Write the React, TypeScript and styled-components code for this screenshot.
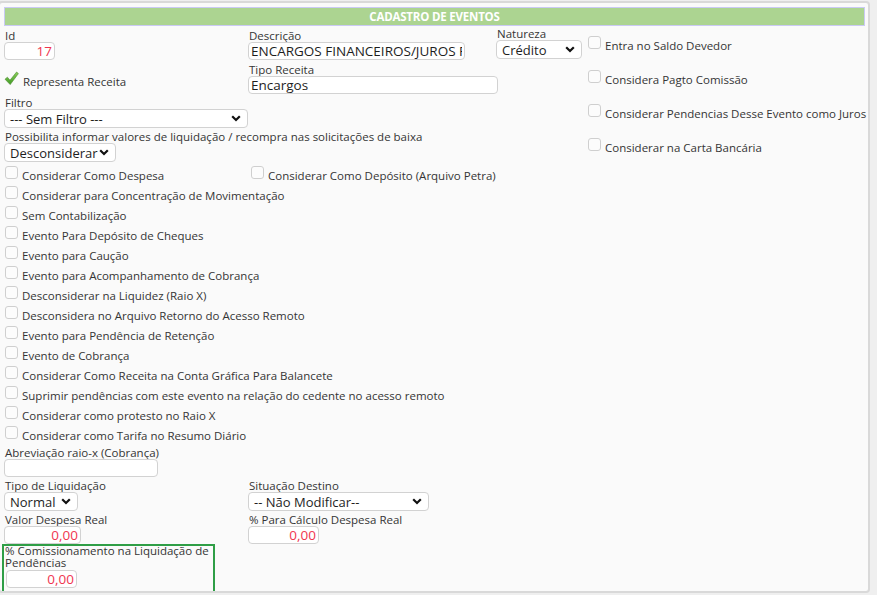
import styled, { createGlobalStyle } from "styled-components";

const GlobalStyle = createGlobalStyle`
  html, body {
    margin: 0;
    padding: 0;
    background: #efefef;
  }
  body {
    font-family: "Open Sans", "Liberation Sans", sans-serif;
    color: #353535;
    overflow: hidden;
  }
`;

const Page = styled.div`
  width: 877px;
  height: 595px;
  padding-top: 1px;
  box-sizing: border-box;
`;

const Panel = styled.div`
  margin-left: -2px;
  width: 872px;
  height: 592px;
  box-sizing: border-box;
  border: 2px solid #d9d9d9;
  border-radius: 4px;
  background: #fafafa;
  padding: 4px 0 0 4px;
  font-size: 11.5px;
  overflow: hidden;
`;

const Header = styled.div`
  width: 861px;
  height: 19px;
  box-sizing: border-box;
  border: 1px solid #cacaf4;
  background: #acd491;
  color: #fff;
  font-weight: 700;
  font-size: 11.5px;
  letter-spacing: -0.2px;
  display: flex;
  align-items: center;
  justify-content: center;
`;

const TopArea = styled.div`
  display: flex;
  align-items: flex-start;
`;

const TopGrid = styled.div`
  width: 580px;
  display: grid;
  grid-template-columns: 244px 248px 84px;
  grid-template-rows: 35px 34px 34px 34px;
`;

const Cell = styled.div<{ $col?: string; $row?: string; $top?: number }>`
  grid-column: ${(p) => p.$col || "auto"};
  grid-row: ${(p) => p.$row || "auto"};
  padding-top: ${(p) => p.$top ?? 0}px;
  display: flex;
  flex-direction: column;
  align-items: flex-start;
`;

const Label = styled.label`
  display: block;
  font-size: 11.5px;
  line-height: 13px;
  padding-left: 1px;
  white-space: nowrap;
`;

const TextInput = styled.input<{ $w: number; $num?: boolean }>`
  width: ${(p) => p.$w}px;
  height: 18px;
  box-sizing: border-box;
  border: 1px solid #d2d2d2;
  border-radius: 4px;
  background: #fff;
  padding: 0 2px;
  margin: 0;
  font-family: inherit;
  font-size: 13.5px;
  color: ${(p) => (p.$num ? "#f0364f" : "#1e1e1e")};
  text-align: ${(p) => (p.$num ? "right" : "left")};
  outline: none;
`;

const SelectBox = styled.div<{ $w: number }>`
  width: ${(p) => p.$w}px;
  height: 19px;
  box-sizing: border-box;
  border: 1px solid #d2d2d2;
  border-radius: 4px;
  background: #fff;
  display: flex;
  align-items: center;
  justify-content: space-between;
  padding: 0 6px 0 5px;
  font-size: 13px;
  color: #1e1e1e;
  white-space: nowrap;
`;

const Box = styled.span`
  width: 13px;
  height: 13px;
  box-sizing: border-box;
  border: 1px solid #cfcfcf;
  border-radius: 3px;
  background: #fcfcfc;
  flex-shrink: 0;
`;

const CheckRow = styled.div<{ $h?: number }>`
  display: flex;
  align-items: flex-start;
  height: ${(p) => (p.$h ? `${p.$h}px` : "auto")};
  gap: 4px;
  white-space: nowrap;
`;

const CheckText = styled.span<{ $top?: number }>`
  padding-top: ${(p) => p.$top ?? 3}px;
  line-height: 13px;
`;

const RightChecks = styled.div`
  padding-top: 10px;
  padding-left: 4px;
  display: flex;
  flex-direction: column;
  gap: 18px;
`;

const CheckList = styled.div`
  padding-top: 3px;
  padding-left: 1px;
  display: flex;
  flex-direction: column;
`;

const SplitRow = styled.div`
  display: grid;
  grid-template-columns: 246px auto;
`;

const BottomGrid = styled.div`
  display: grid;
  grid-template-columns: 244px auto;
  grid-template-rows: 34px 33px;
`;

const Highlight = styled.div`
  margin-left: -2px;
  width: 213px;
  height: 49px;
  box-sizing: border-box;
  border: 2px solid #2f9e46;
  display: flex;
  flex-direction: column;
`;

const WrapLabel = styled.div`
  line-height: 12px;
  padding-left: 1px;
  margin-top: -1px;
`;

const FieldWrap = styled.div`
  padding: 1px 0 0 2px;
`;

const Chevron = () => (
  <svg width="10" height="7" viewBox="0 0 10 7">
    <path d="M1.2 1.2 L5 5 L8.8 1.2" fill="none" stroke="#111" strokeWidth="2.2" />
  </svg>
);

const GreenCheck = () => (
  <svg width="15" height="15" viewBox="0 0 15 15">
    <defs>
      <linearGradient id="gck" x1="0" y1="0" x2="0" y2="1">
        <stop offset="0" stopColor="#8ccf5b" />
        <stop offset="1" stopColor="#3f9a24" />
      </linearGradient>
    </defs>
    <path
      d="M1 8.2 L3.4 6.2 L6 9.2 L12.6 1 L14.4 2.6 L6.2 13.6 Z"
      fill="url(#gck)"
      stroke="#4a8a2c"
      strokeWidth="0.6"
      strokeLinejoin="round"
    />
  </svg>
);

const Check = ({ text, h = 20 }: { text: string; h?: number }) => (
  <CheckRow $h={h}>
    <Box />
    <CheckText>{text}</CheckText>
  </CheckRow>
);

const listItems = [
  "Considerar para Concentração de Movimentação",
  "Sem Contabilização",
  "Evento Para Depósito de Cheques",
  "Evento para Caução",
  "Evento para Acompanhamento de Cobrança",
  "Desconsiderar na Liquidez (Raio X)",
  "Desconsidera no Arquivo Retorno do Acesso Remoto",
  "Evento para Pendência de Retenção",
  "Evento de Cobrança",
  "Considerar Como Receita na Conta Gráfica Para Balancete",
  "Suprimir pendências com este evento na relação do cedente no acesso remoto",
  "Considerar como protesto no Raio X",
  "Considerar como Tarifa no Resumo Diário",
];

const rightItems = [
  "Entra no Saldo Devedor",
  "Considera Pagto Comissão",
  "Considerar Pendencias Desse Evento como Juros",
  "Considerar na Carta Bancária",
];

export default function App() {
  return (
    <Page>
      <GlobalStyle />
      <Panel>
        <Header>CADASTRO DE EVENTOS</Header>
        <TopArea>
          <TopGrid>
            <Cell $col="1" $row="1" $top={3}>
              <Label>Id</Label>
              <TextInput $w={51} $num readOnly value="17" />
            </Cell>
            <Cell $col="2" $row="1" $top={3}>
              <Label>Descrição</Label>
              <TextInput $w={217} readOnly value="ENCARGOS FINANCEIROS/JUROS PAGOS" />
            </Cell>
            <Cell $col="3" $row="1" $top={1}>
              <Label>Natureza</Label>
              <SelectBox $w={86}>
                Crédito
                <Chevron />
              </SelectBox>
            </Cell>
            <Cell $col="1" $row="2" $top={10}>
              <CheckRow>
                <GreenCheck />
                <CheckText $top={4}>Representa Receita</CheckText>
              </CheckRow>
            </Cell>
            <Cell $col="2 / span 2" $row="2" $top={2}>
              <Label>Tipo Receita</Label>
              <TextInput $w={250} readOnly value="Encargos" />
            </Cell>
            <Cell $col="1 / span 2" $row="3" $top={1}>
              <Label>Filtro</Label>
              <SelectBox $w={244}>
                --- Sem Filtro ---
                <Chevron />
              </SelectBox>
            </Cell>
            <Cell $col="1 / span 3" $row="4" $top={1}>
              <Label>Possibilita informar valores de liquidação / recompra nas solicitações de baixa</Label>
              <SelectBox $w={112}>
                Desconsiderar
                <Chevron />
              </SelectBox>
            </Cell>
          </TopGrid>
          <RightChecks>
            {rightItems.map((t) => (
              <Check key={t} text={t} h={16} />
            ))}
          </RightChecks>
        </TopArea>

        <CheckList>
          <SplitRow>
            <Check text="Considerar Como Despesa" />
            <Check text="Considerar Como Depósito (Arquivo Petra)" />
          </SplitRow>
          {listItems.map((t) => (
            <Check key={t} text={t} />
          ))}
        </CheckList>

        <Cell>
          <Label>Abreviação raio-x (Cobrança)</Label>
          <TextInput $w={154} readOnly value="" />
        </Cell>

        <BottomGrid>
          <Cell $top={2}>
            <Label>Tipo de Liquidação</Label>
            <SelectBox $w={74}>
              Normal
              <Chevron />
            </SelectBox>
          </Cell>
          <Cell $top={2}>
            <Label>Situação Destino</Label>
            <SelectBox $w={181}>
              -- Não Modificar--
              <Chevron />
            </SelectBox>
          </Cell>
          <Cell $top={2}>
            <Label>Valor Despesa Real</Label>
            <TextInput $w={77} $num readOnly value="0,00" />
          </Cell>
          <Cell $top={2}>
            <Label>% Para Cálculo Despesa Real</Label>
            <TextInput $w={71} $num readOnly value="0,00" />
          </Cell>
        </BottomGrid>

        <Highlight>
          <WrapLabel>% Comissionamento na Liquidação de Pendências</WrapLabel>
          <FieldWrap>
            <TextInput $w={71} $num readOnly value="0,00" />
          </FieldWrap>
        </Highlight>
      </Panel>
    </Page>
  );
}
